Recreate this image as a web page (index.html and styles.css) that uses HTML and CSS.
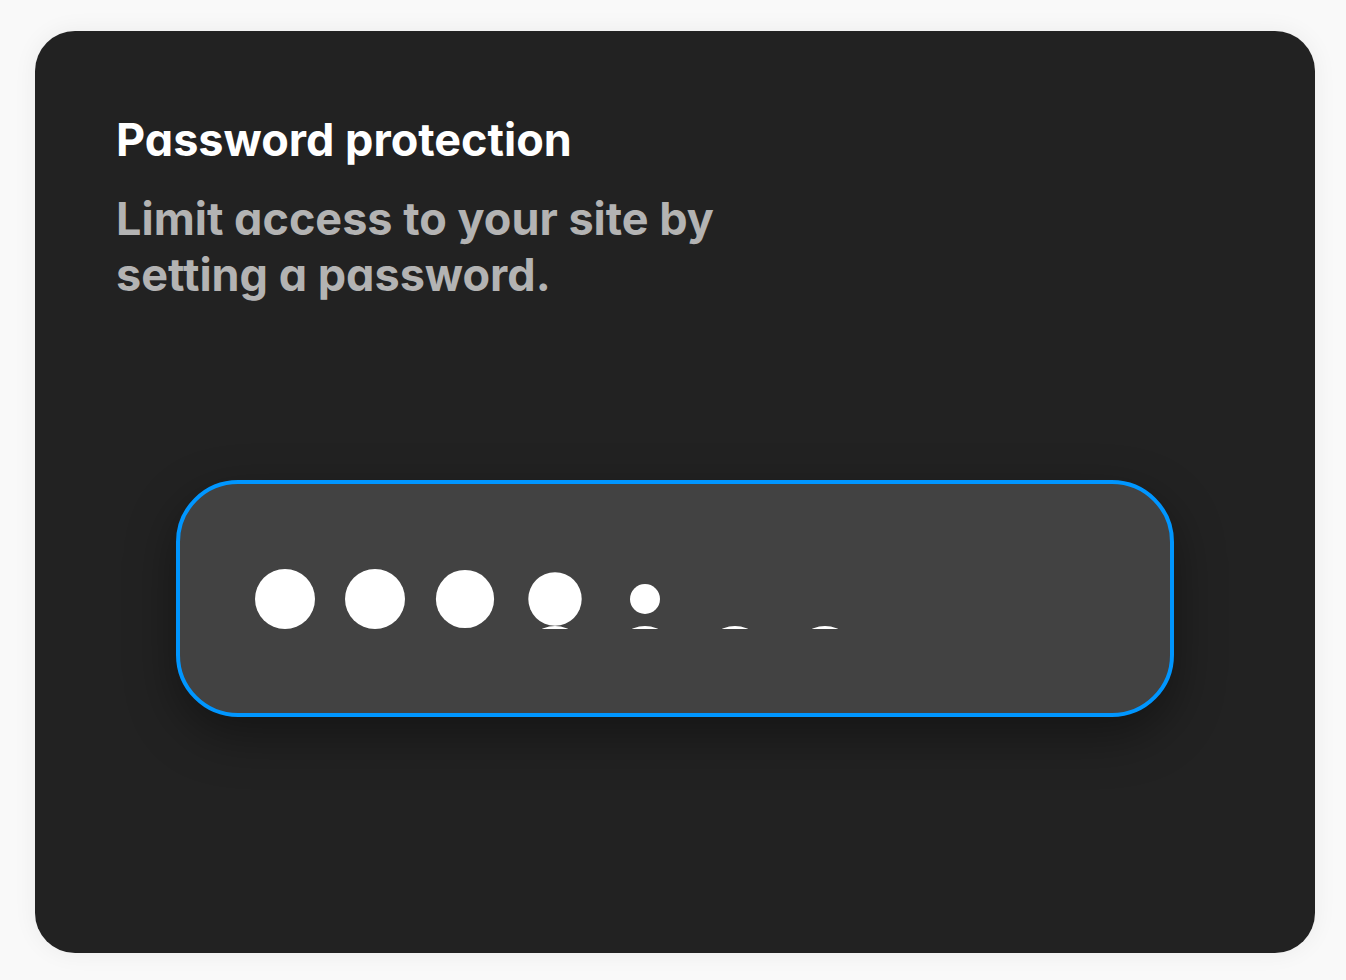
FILE: index.html
```html
<!DOCTYPE html>
<html lang="en">
<head>
<meta charset="utf-8">
<title>Password protection</title>
<link rel="stylesheet" href="styles.css">
</head>
<body>
<main class="page">
  <section class="card">
    <h1 class="title">Password protection</h1>
    <p class="subtitle">Limit access to your site by<br>setting a password.</p>
    <div class="field-wrap">
      <div class="field" role="textbox" aria-label="Password">
        <span class="slot"><span class="dot"></span></span>
        <span class="slot"><span class="dot"></span></span>
        <span class="slot"><span class="dot dot-58"></span></span>
        <span class="slot"><span class="dot dot-54"></span><span class="dot dot-rise"></span></span>
        <span class="slot"><span class="dot dot-30"></span><span class="dot dot-rise"></span></span>
        <span class="slot"><span class="dot dot-rise"></span></span>
        <span class="slot"><span class="dot dot-rise"></span></span>
      </div>
    </div>
  </section>
</main>
</body>
</html>
```

FILE: styles.css
```css
* { box-sizing: border-box; }
html, body {
  margin: 0;
  padding: 0;
  background: #f9f9f9;
}
.page {
  padding: 31px 31px 27px 35px;
}
.card {
  width: 1280px;
  height: 922px;
  background: #222222;
  border-radius: 40px;
  box-shadow: 0 0 24px rgba(0, 0, 0, 0.06);
  padding: 81px 81px 0 81px;
  font-family: Inter, "Noto Sans", sans-serif;
  font-feature-settings: "cv11" 1;
}
.title {
  margin: 0;
  color: #ffffff;
  font-size: 45px;
  font-weight: 700;
  line-height: 56px;
  letter-spacing: 0;
}
.subtitle {
  margin: 23px 0 0 0;
  color: #b3b3b3;
  font-size: 45px;
  font-weight: 700;
  line-height: 56px;
  letter-spacing: 0;
}
.field-wrap {
  display: flex;
  justify-content: center;
  margin-top: 177px;
}
.field {
  width: 998px;
  height: 237px;
  border: 4px solid #0096ff;
  border-radius: 62px;
  background: #424242;
  box-shadow: 0 18px 50px rgba(0, 0, 0, 0.4);
  display: flex;
  align-items: center;
  gap: 30px;
  padding-left: 75px;
}
.slot {
  position: relative;
  width: 60px;
  height: 60px;
  overflow: hidden;
  display: flex;
  align-items: center;
  justify-content: center;
}
.dot {
  width: 60px;
  height: 60px;
  border-radius: 50%;
  background: #ffffff;
  flex: none;
}
.dot-58 { transform: scale(0.97); }
.dot-54 { transform: scale(0.89); }
.dot-30 { transform: scale(0.5); }
.dot-rise {
  position: absolute;
  left: 0;
  top: 0;
  transform: translateY(57px);
}
```
